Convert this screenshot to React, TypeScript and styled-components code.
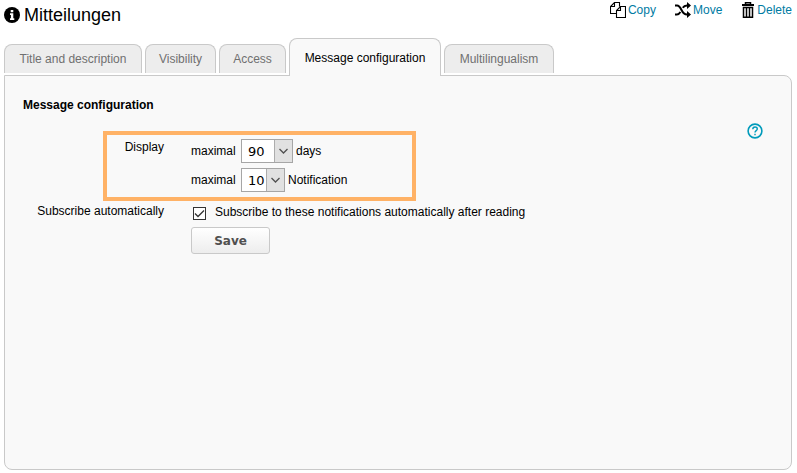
import React from "react";
import styled, { createGlobalStyle } from "styled-components";

const GlobalStyle = createGlobalStyle`
  * { box-sizing: border-box; }
  body {
    margin: 0;
    background: #fff;
    color: #000;
    font: 12px/16px "Liberation Sans", Arial, sans-serif;
  }
`;

const Page = styled.div`
  display: flex;
  flex-direction: column;
  min-height: 100vh;
  padding: 0 5px 3px 4px;
`;

const Header = styled.header`
  display: flex;
  justify-content: space-between;
  align-items: flex-start;
  height: 38px;
`;

const Title = styled.h1`
  display: flex;
  align-items: center;
  gap: 4px;
  margin: 4px 0 0;
  font-size: 18px;
  line-height: 22px;
  font-weight: 400;
`;

const Actions = styled.nav`
  display: flex;
  gap: 19px;
  padding-top: 2px;
`;

const Action = styled.a`
  display: flex;
  align-items: center;
  gap: 2px;
  color: #007ba3;
  text-decoration: none;
  svg { color: #000; }
`;

const Tabs = styled.div`
  display: flex;
  align-items: flex-start;
  gap: 3px;
  height: 37px;
`;

const Tab = styled.button<{ $active?: boolean; $width: number }>`
  position: relative;
  flex: 0 1 ${(p) => p.$width}px;
  height: ${(p) => (p.$active ? 38 : 29)}px;
  margin-top: ${(p) => (p.$active ? 0 : 6)}px;
  padding: 0;
  border: 1px solid #c9c9c9;
  border-bottom: 0;
  border-radius: 8px 8px 0 0;
  background: ${(p) => (p.$active ? "#f9f9f9" : "#ededed")};
  color: ${(p) => (p.$active ? "#000" : "#707070")};
  font: inherit;
  white-space: nowrap;
`;

const Panel = styled.main`
  flex: 1;
  padding: 21px 18px;
  border: 1px solid #c9c9c9;
  border-radius: 0 8px 8px 8px;
  background: #f9f9f9;
`;

const Heading = styled.h2`
  margin: 0;
  font-size: 12px;
  line-height: 17px;
  font-weight: 700;
`;

const Body = styled.div`
  display: flex;
  justify-content: space-between;
  align-items: flex-start;
  padding-top: 9px;
`;

const HelpButton = styled.button`
  display: flex;
  margin: 0 10px 0 0;
  padding: 0;
  border: 0;
  background: none;
`;

const Form = styled.form`
  padding-top: 8px;
`;

const Highlight = styled.div`
  display: grid;
  grid-template-columns: 57px 1fr;
  column-gap: 27px;
  width: 313px;
  height: 70px;
  margin-left: 80px;
  padding-top: 4px;
  border: 4px solid #ffb266;
`;

const RowLabel = styled.div`
  text-align: right;
`;

const Limits = styled.div`
  display: flex;
  flex-direction: column;
  gap: 5px;
`;

const Limit = styled.label`
  display: grid;
  grid-template-columns: 47px auto 1fr;
  align-items: center;
  column-gap: 3px;
  height: 24px;
`;

const SelectBox = styled.span<{ $width: number }>`
  display: grid;
  grid-template-columns: 1fr 18px;
  width: ${(p) => p.$width}px;
  height: 24px;
  border: 1px solid #a6a6a6;
  background: #fff;
  svg {
    grid-area: 1 / 2;
    width: 100%;
    height: 22px;
    border-left: 1px solid #adadad;
    background: #e1e1e1;
    pointer-events: none;
    z-index: 1;
  }
`;

const Select = styled.select`
  grid-area: 1 / 1 / 2 / 3;
  width: 100%;
  height: 22px;
  padding: 0 0 0 6px;
  border: 0;
  background: none;
  appearance: none;
  color: #000;
  font: 13px "DejaVu Sans", Verdana, sans-serif;
`;

const Row = styled.div`
  display: grid;
  grid-template-columns: 141px 1fr;
  column-gap: 27px;
  padding-top: 2px;
`;

const CheckLabel = styled.label`
  display: flex;
  align-items: center;
  gap: 9px;
  padding: 1px 0 0 2px;
`;

const Checkbox = styled.input`
  appearance: none;
  width: 13px;
  height: 13px;
  margin: 2px 0 0;
  border: 1px solid #333;
  background: #fff;
  &:checked {
    background: #fff url("data:image/svg+xml,%3Csvg xmlns='http://www.w3.org/2000/svg' viewBox='0 0 11 11'%3E%3Cpath d='M1 5.5 4 8.5 10 2.5' fill='none' stroke='%23333' stroke-width='1.3'/%3E%3C/svg%3E");
  }
`;

const SaveButton = styled.button`
  width: 79px;
  height: 27px;
  margin: 7px 0 0 168px;
  padding: 0;
  border: 1px solid #c9c9c9;
  border-radius: 3px;
  background: linear-gradient(#fff, #ededed);
  color: #505050;
  font: bold 12px "DejaVu Sans", Verdana, sans-serif;
`;

const InfoIcon = () => (
  <svg width="16" height="16" viewBox="0 0 16 16" aria-hidden="true">
    <circle cx="8" cy="8" r="8" fill="#000" />
    <path d="M6.7 3h2.6v2.2H6.7zM6 6.3h3.3v5h1V13H6v-1.7h.9V8H6z" fill="#fff" />
  </svg>
);

const CopyIcon = () => (
  <svg width="16" height="16" viewBox="0 0 16 16" aria-hidden="true">
    <path
      d="M6.5 11.5h-6v-7l4-4h5v4M4.5.5v4h-4M10.5 4.5h5v11h-9v-7zM10.5 4.5v4h-4"
      fill="none"
      stroke="currentColor"
      strokeWidth="1.1"
    />
  </svg>
);

const MoveIcon = () => (
  <svg width="16" height="16" viewBox="0 0 16 16" aria-hidden="true">
    <path
      d="M0 3.5h2c2 0 3 1.400 4.500 4.500S9.500 12.500 12 12.500h1M0 12.500h2c1.500 0 2.500-.9 3.400-2.400M7.800 5.800C8.700 4.300 9.800 3.500 12 3.500h1"
      fill="none"
      stroke="currentColor"
      strokeWidth="2"
    />
    <path d="M12 0l4 3.500L12 7zM12 9l4 3.500-4 3.500z" fill="currentColor" />
  </svg>
);

const TrashIcon = () => (
  <svg width="14" height="16" viewBox="0 0 14 16" aria-hidden="true">
    <path d="M4.500 2V.7h5V2M2.500 5.500h9v9.700h-9zM5.500 6v9M8.500 6v9" fill="none" stroke="currentColor" strokeWidth="1.500" />
    <path d="M1 2h12v2H1z" fill="currentColor" />
  </svg>
);

const HelpIcon = () => (
  <svg width="16" height="16" viewBox="0 0 16 16" fill="none" stroke="#009bbb" aria-hidden="true">
    <circle cx="8" cy="8" r="6.900" strokeWidth="1.600" />
    <path d="M5.800 6.200C5.800 4.800 6.700 4 8 4s2.300.8 2.300 2c0 1.600-2.300 1.700-2.300 3.500M8 10.700v1.600" strokeWidth="1.400" />
  </svg>
);

const Chevron = () => (
  <svg viewBox="0 0 17 22" aria-hidden="true">
    <path d="M4.500 9l4 4 4-4" fill="none" stroke="#505050" strokeWidth="1.300" />
  </svg>
);

const tabs = [
  { label: "Title and description", width: 138 },
  { label: "Visibility", width: 71 },
  { label: "Access", width: 67 },
  { label: "Message configuration", width: 152, active: true },
  { label: "Multilingualism", width: 110 },
];

export default function App() {
  return (
    <>
      <GlobalStyle />
      <Page>
        <Header>
          <Title><InfoIcon />Mitteilungen</Title>
          <Actions>
            <Action href="#copy"><CopyIcon />Copy</Action>
            <Action href="#move"><MoveIcon />Move</Action>
            <Action href="#delete"><TrashIcon />Delete</Action>
          </Actions>
        </Header>
        <Tabs role="tablist">
          {tabs.map((t) => (
            <Tab key={t.label} type="button" role="tab" aria-selected={!!t.active} $active={t.active} $width={t.width}>
              {t.label}
            </Tab>
          ))}
        </Tabs>
        <Panel>
          <Heading>Message configuration</Heading>
          <Body>
            <Form onSubmit={(e) => e.preventDefault()}>
              <Highlight role="group" aria-labelledby="display-label">
                <RowLabel id="display-label">Display</RowLabel>
                <Limits>
                  <Limit>
                    maximal
                    <SelectBox $width={52}>
                      <Select defaultValue="90"><option>30</option><option>60</option><option>90</option></Select>
                      <Chevron />
                    </SelectBox>
                    days
                  </Limit>
                  <Limit>
                    maximal
                    <SelectBox $width={44}>
                      <Select defaultValue="10"><option>5</option><option>10</option><option>20</option></Select>
                      <Chevron />
                    </SelectBox>
                    Notification
                  </Limit>
                </Limits>
              </Highlight>
              <Row>
                <RowLabel>Subscribe automatically</RowLabel>
                <CheckLabel>
                  <Checkbox type="checkbox" defaultChecked />
                  Subscribe to these notifications automatically after reading
                </CheckLabel>
              </Row>
              <SaveButton type="submit">Save</SaveButton>
            </Form>
            <HelpButton type="button" aria-label="Help"><HelpIcon /></HelpButton>
          </Body>
        </Panel>
      </Page>
    </>
  );
}
